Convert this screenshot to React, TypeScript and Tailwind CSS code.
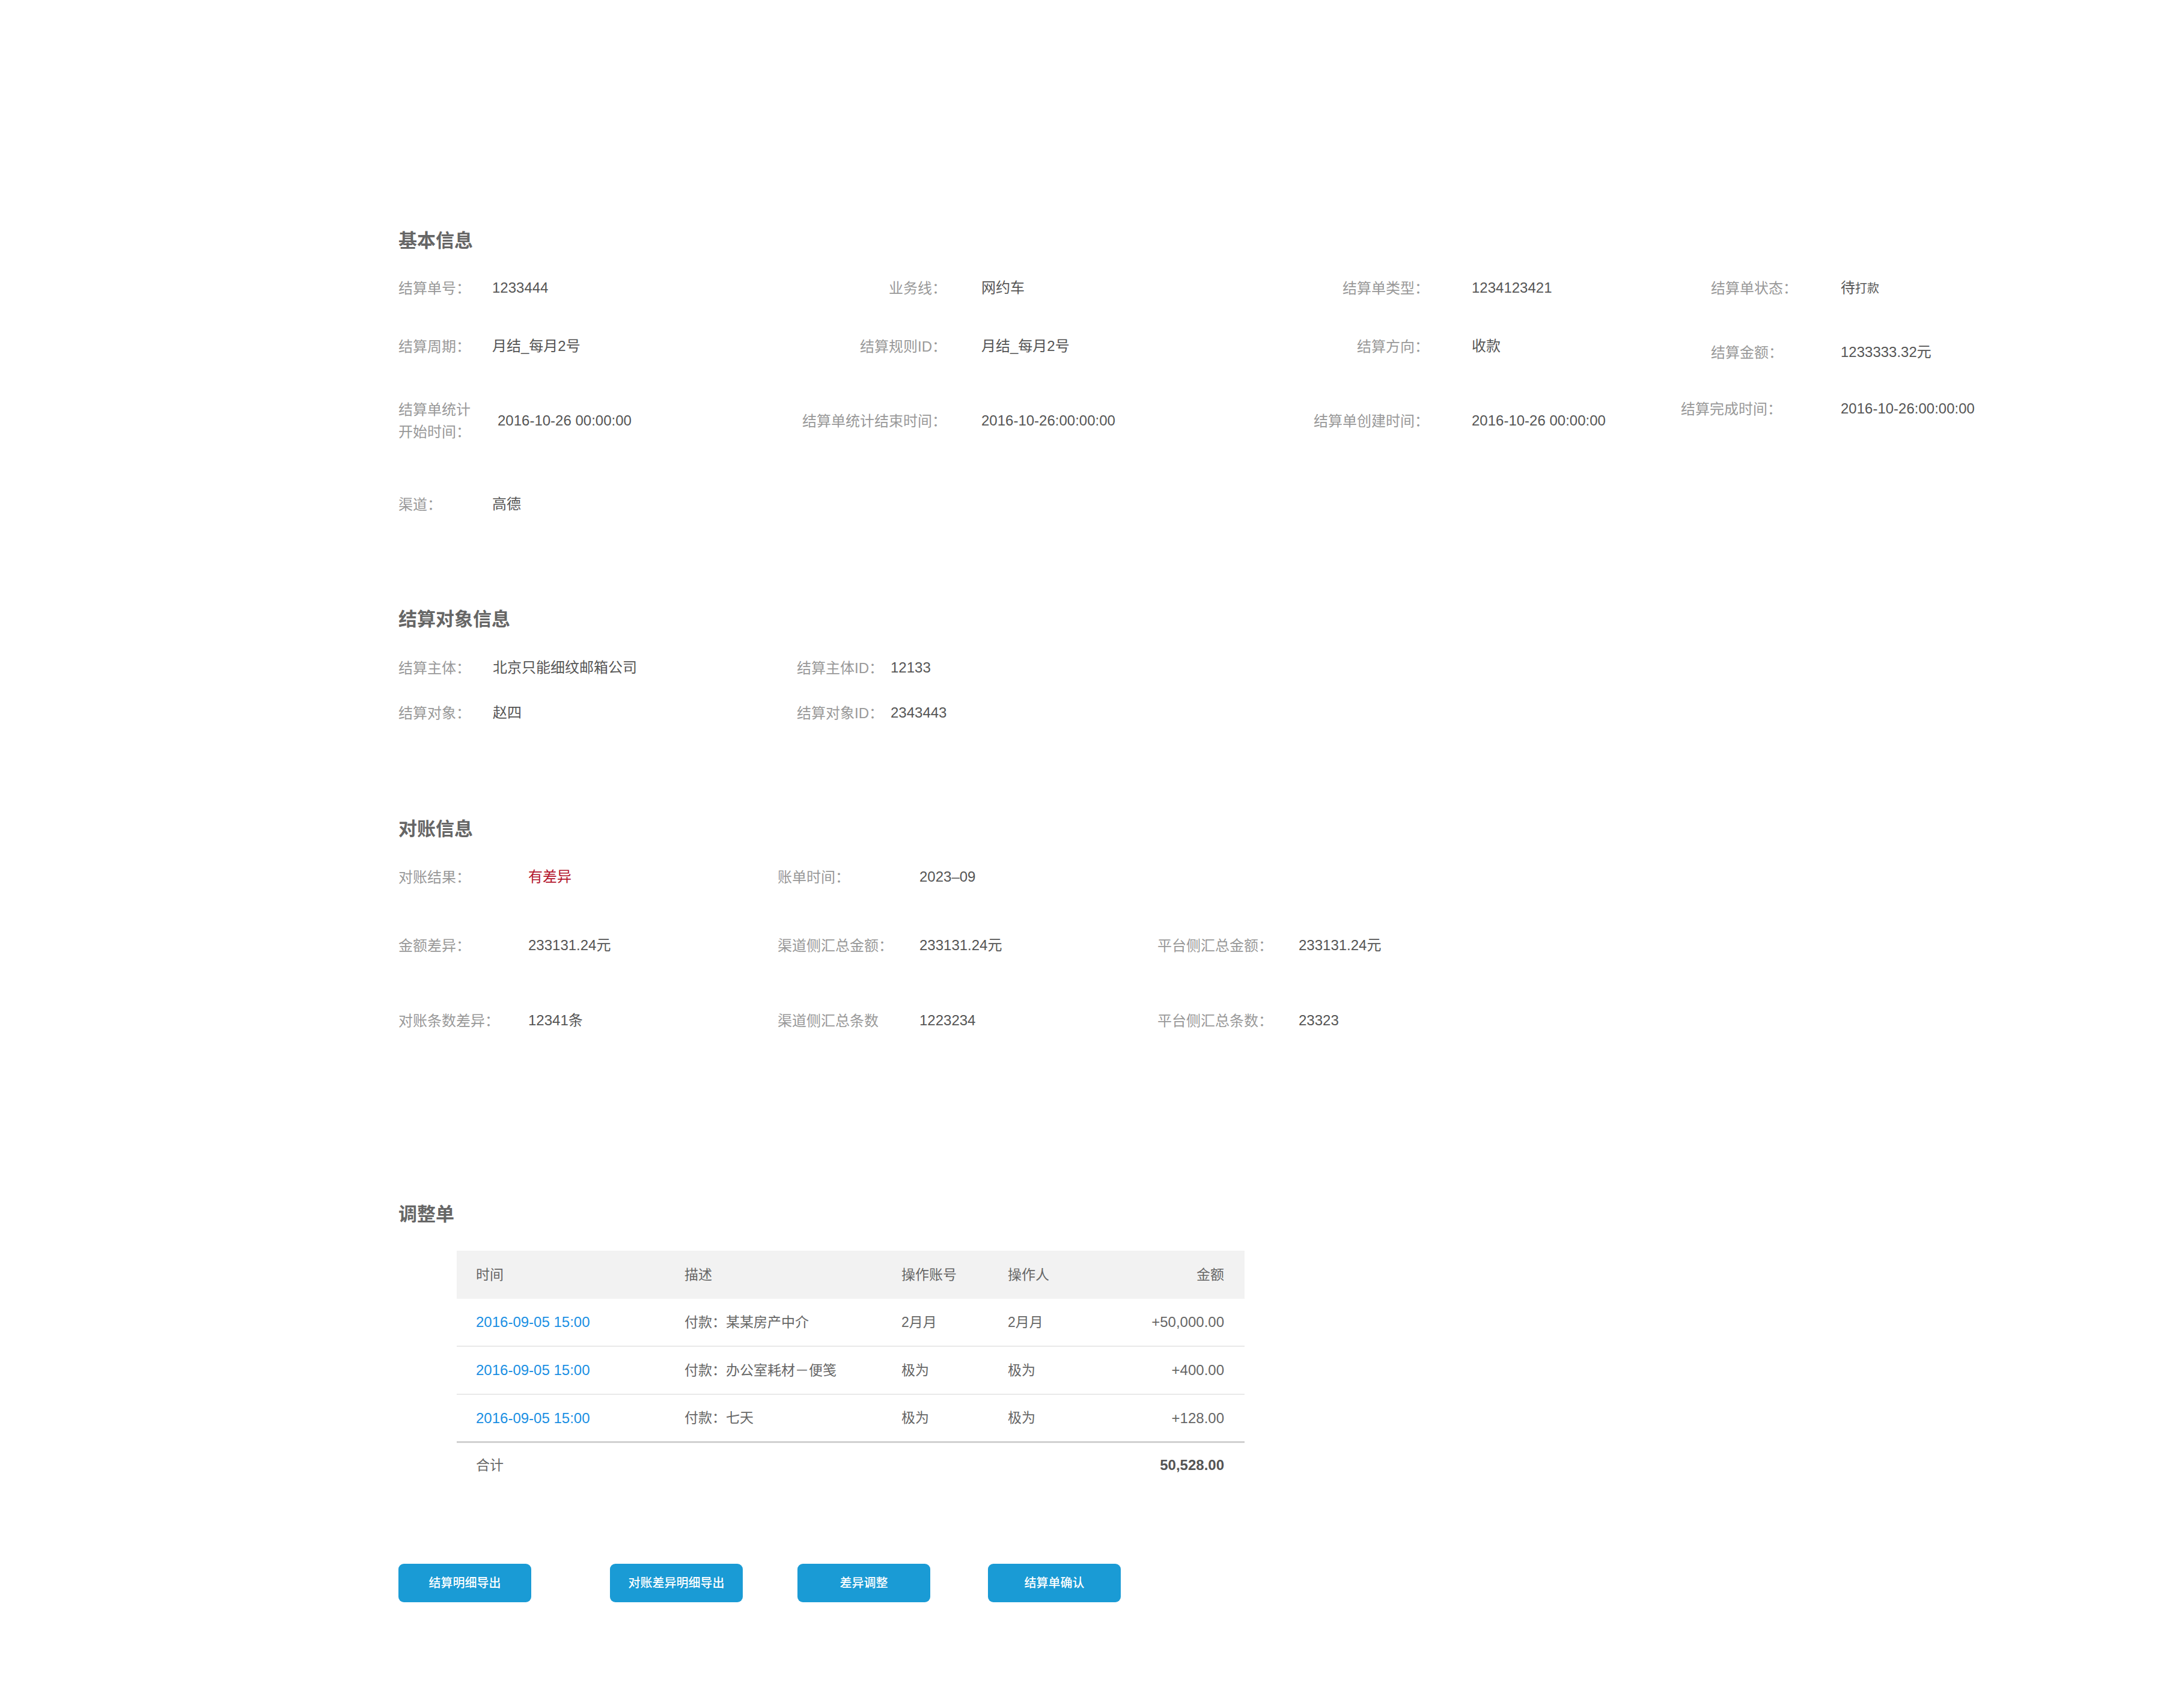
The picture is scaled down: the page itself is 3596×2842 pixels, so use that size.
import React from "react";

type Cell = { label: React.ReactNode; value: React.ReactNode };

const Label = ({ children, className = "" }: { children: React.ReactNode; className?: string }) => (
  <div className={`shrink-0 text-[24px] text-[#999] leading-[37px] ${className}`}>{children}</div>
);

const Value = ({ children, className = "" }: { children: React.ReactNode; className?: string }) => (
  <div className={`text-[24px] text-[#555] whitespace-nowrap ${className}`}>{children}</div>
);

const SectionTitle = ({ children, className = "" }: { children: React.ReactNode; className?: string }) => (
  <h2 className={`h-[40px] flex items-center text-[31px] font-bold text-[#666] ${className}`}>{children}</h2>
);

// 基本信息的四列：列宽和标签宽度对齐到各自的冒号位置
const BasicRow = ({
  cells,
  className = "",
  lastCell = "",
  lastPad = "pl-[50px]",
  firstValue = "",
}: {
  cells: Cell[];
  className?: string;
  lastCell?: string;
  lastPad?: string;
  firstValue?: string;
}) => (
  <div className={`flex items-center ${className}`}>
    <div className="flex w-[662px] shrink-0 items-center">
      <Label className="w-[156px]">{cells[0].label}</Label>
      <Value className={firstValue}>{cells[0].value}</Value>
    </div>
    {cells[1] && (
      <div className="flex w-[825px] shrink-0 items-center">
        <Label className="w-[250px] text-right">{cells[1].label}</Label>
        <Value className="ml-[58px]">{cells[1].value}</Value>
      </div>
    )}
    {cells[2] && (
      <div className="flex w-[647px] shrink-0 items-center">
        <Label className="w-[228px] text-right">{cells[2].label}</Label>
        <Value className="ml-[71px]">{cells[2].value}</Value>
      </div>
    )}
    {cells[3] && (
      <div className={`flex shrink-0 items-center ${lastCell}`}>
        <Label className={`w-[266px] ${lastPad}`}>{cells[3].label}</Label>
        <Value>{cells[3].value}</Value>
      </div>
    )}
  </div>
);

const rows = [
  { time: "2016-09-05 15:00", desc: "付款：某某房产中介", account: "2月月", operator: "2月月", amount: "+50,000.00" },
  { time: "2016-09-05 15:00", desc: "付款：办公室耗材－便笺", account: "极为", operator: "极为", amount: "+400.00" },
  { time: "2016-09-05 15:00", desc: "付款：七天", account: "极为", operator: "极为", amount: "+128.00" },
];

const buttons = [
  { text: "结算明细导出", gap: "" },
  { text: "对账差异明细导出", gap: "ml-[131px]" },
  { text: "差异调整", gap: "ml-[91px]" },
  { text: "结算单确认", gap: "ml-[96px]" },
];

export default function App() {
  return (
    <div className="min-h-[2842px] w-[3596px] bg-white pl-[663px] pt-[381px] font-['Liberation_Sans','Noto_Sans_CJK_SC',sans-serif]">
      {/* 基本信息 */}
      <SectionTitle>基本信息</SectionTitle>
      <BasicRow
        className="mt-[34px] h-[48px]"
        cells={[
          { label: "结算单号：", value: "1233444" },
          { label: "业务线：", value: "网约车" },
          { label: "结算单类型：", value: "1234123421" },
          {
            label: "结算单状态：",
            value: (
              <>
                待<span className="text-[20px]">打款</span>
              </>
            ),
          },
        ]}
      />
      <BasicRow
        className="mt-[49px] h-[48px]"
        lastCell="relative top-[10px]"
        cells={[
          { label: "结算周期：", value: "月结_每月2号" },
          { label: "结算规则ID：", value: "月结_每月2号" },
          { label: "结算方向：", value: "收款" },
          { label: "结算金额：", value: "1233333.32元" },
        ]}
      />
      <BasicRow
        className="mt-[60px] h-[80px]"
        firstValue="ml-[9px]"
        lastCell="relative -top-[20px]"
        lastPad=""
        cells={[
          {
            label: (
              <>
                结算单统计
                <br />
                开始时间：
              </>
            ),
            value: "2016-10-26 00:00:00",
          },
          { label: "结算单统计结束时间：", value: "2016-10-26:00:00:00" },
          { label: "结算单创建时间：", value: "2016-10-26 00:00:00" },
          { label: "结算完成时间：", value: "2016-10-26:00:00:00" },
        ]}
      />
      <BasicRow className="mt-[75px] h-[48px]" cells={[{ label: "渠道：", value: "高德" }]} />

      {/* 结算对象信息 */}
      <SectionTitle className="mt-[148px]">结算对象信息</SectionTitle>
      <div className="mt-[36px] flex h-[48px] items-center">
        <div className="flex w-[663px] items-center">
          <Label className="w-[157px]">结算主体：</Label>
          <Value>北京只能细纹邮箱公司</Value>
        </div>
        <Label className="w-[156px]">结算主体ID：</Label>
        <Value>12133</Value>
      </div>
      <div className="mt-[27px] flex h-[48px] items-center">
        <div className="flex w-[663px] items-center">
          <Label className="w-[157px]">结算对象：</Label>
          <Value>赵四</Value>
        </div>
        <Label className="w-[156px]">结算对象ID：</Label>
        <Value>2343443</Value>
      </div>

      {/* 对账信息 */}
      <SectionTitle className="mt-[150px]">对账信息</SectionTitle>
      <div className="mt-[35px] flex h-[48px] items-center">
        <div className="flex w-[631px] items-center">
          <Label className="w-[216px]">对账结果：</Label>
          <Value className="text-[#b3152d]">有差异</Value>
        </div>
        <Label className="w-[236px]">账单时间：</Label>
        <Value>2023–09</Value>
      </div>
      <div className="mt-[66px] flex h-[48px] items-center">
        <div className="flex w-[631px] items-center">
          <Label className="w-[216px]">金额差异：</Label>
          <Value>233131.24元</Value>
        </div>
        <div className="flex w-[632px] items-center">
          <Label className="w-[236px]">渠道侧汇总金额：</Label>
          <Value>233131.24元</Value>
        </div>
        <Label className="w-[235px]">平台侧汇总金额：</Label>
        <Value>233131.24元</Value>
      </div>
      <div className="mt-[77px] flex h-[48px] items-center">
        <div className="flex w-[631px] items-center">
          <Label className="w-[216px]">对账条数差异：</Label>
          <Value>12341条</Value>
        </div>
        <div className="flex w-[632px] items-center">
          <Label className="w-[236px]">渠道侧汇总条数</Label>
          <Value>1223234</Value>
        </div>
        <Label className="w-[235px]">平台侧汇总条数：</Label>
        <Value>23323</Value>
      </div>

      {/* 调整单 */}
      <SectionTitle className="mt-[279px]">调整单</SectionTitle>
      <div className="ml-[97px] mt-[40px] w-[1311px] text-[24px] text-[#666]">
        <div className="flex h-[80px] items-center bg-[#f2f2f2] text-[23px]">
          <div className="w-[379px] pl-[32px]">时间</div>
          <div className="w-[361px]">描述</div>
          <div className="w-[177px]">操作账号</div>
          <div className="w-[200px]">操作人</div>
          <div className="flex-1 pr-[34px] text-right">金额</div>
        </div>
        {rows.map((r, i) => (
          <div
            key={i}
            className={`flex h-[80px] items-center ${
              i === rows.length - 1 ? "border-b-[3px] border-[#d0d0d0]" : "border-b-2 border-[#e9e9e9]"
            }`}
          >
            <div className="w-[379px] pl-[32px] text-[#1a8fe3]">{r.time}</div>
            <div className="w-[361px] text-[23px]">{r.desc}</div>
            <div className="w-[177px] text-[23px]">{r.account}</div>
            <div className="w-[200px] text-[23px]">{r.operator}</div>
            <div className="flex-1 pr-[34px] text-right">{r.amount}</div>
          </div>
        ))}
        <div className="flex h-[74px] items-center">
          <div className="w-[379px] pl-[32px] text-[23px]">合计</div>
          <div className="flex-1 pr-[34px] text-right font-bold text-[#555]">50,528.00</div>
        </div>
      </div>

      {/* 操作按钮 */}
      <div className="mt-[127px] flex">
        {buttons.map((b) => (
          <button
            key={b.text}
            className={`h-[64px] w-[221px] rounded-[9px] bg-[#1a9bd5] text-[20px] font-medium text-white ${b.gap}`}
          >
            {b.text}
          </button>
        ))}
      </div>
    </div>
  );
}
